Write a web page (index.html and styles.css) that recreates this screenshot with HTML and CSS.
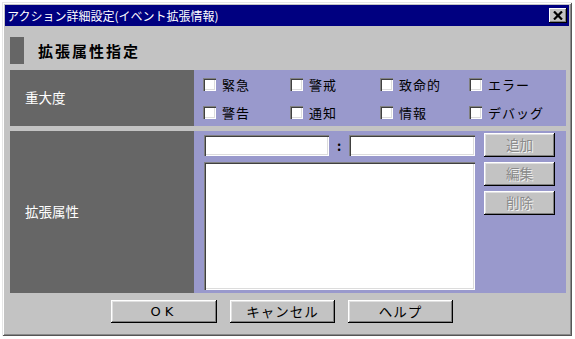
FILE: index.html
```html
<!DOCTYPE html>
<html lang="ja">
<head>
  <meta charset="UTF-8" />
  <title>アクション詳細設定（イベント拡張情報）</title>
  <link rel="stylesheet" href="styles.css">
</head>
<body>

  <div class="window">
    <div class="titlebar">
      <span class="title">アクション詳細設定(イベント拡張情報)</span>
      <button class="close" type="button" aria-label="閉じる">
        <svg width="10" height="9" viewBox="0 0 10 9"><path d="M1 0.5 L9 8.5 M9 0.5 L1 8.5" stroke="#000" stroke-width="2.2" /></svg>
      </button>
    </div>

    <div class="content">
      <div class="section-head">
        <span class="marker"></span>
        <h1>拡張属性指定</h1>
      </div>

      <div class="grid">
        <div class="label">重大度</div>
        <div class="cell severity">
          <label class="check"><span class="box"></span>緊急</label>
          <label class="check"><span class="box"></span>警戒</label>
          <label class="check"><span class="box"></span>致命的</label>
          <label class="check"><span class="box"></span>エラー</label>
          <label class="check"><span class="box"></span>警告</label>
          <label class="check"><span class="box"></span>通知</label>
          <label class="check"><span class="box"></span>情報</label>
          <label class="check"><span class="box"></span>デバッグ</label>
        </div>

        <div class="label">拡張属性</div>
        <div class="cell attrs">
          <div class="editor">
            <div class="pair">
              <input type="text" class="field key" />
              <span class="colon">:</span>
              <input type="text" class="field value" />
            </div>
            <div class="list"></div>
          </div>
          <div class="side-buttons">
            <button class="btn disabled" type="button">追加</button>
            <button class="btn disabled" type="button">編集</button>
            <button class="btn disabled" type="button">削除</button>
          </div>
        </div>
      </div>

      <div class="actions">
        <button class="btn wide ok" type="button">OK</button>
        <button class="btn wide" type="button">キャンセル</button>
        <button class="btn wide" type="button">ヘルプ</button>
      </div>
    </div>
  </div>

</body>
</html>
```

FILE: styles.css
```css
body {
  margin: 0;
  background-color: #fff;
  font-family: "Noto Sans CJK JP", "DejaVu Sans", sans-serif;
  font-size: 13px;
  color: #000;
}

.window {
  margin: 2px 0 0 2px;
  width: 570px;
  height: 334px;
  box-sizing: border-box;
  padding: 3px 3px 3px 3px;
  background-color: #c3c3c3;
  box-shadow: inset 1px 1px #e6e6e6, inset -1px -1px #555, inset 2px 2px #fff, inset -2px -2px #8a8a8a;
}

/* title bar */
.titlebar {
  height: 21px;
  background-color: #000080;
  display: flex;
  align-items: center;
  justify-content: space-between;
  padding: 0 2px 0 2px;
}

.title {
  color: #fff;
  font-size: 12px;
  line-height: 21px;
}

.close {
  width: 18px;
  height: 15px;
  padding: 0;
  border: none;
  background-color: #c3c3c3;
  display: flex;
  align-items: center;
  justify-content: center;
  box-shadow: inset -1px -1px #000, inset 1px 1px #fff, inset -2px -2px #808080;
}

/* content */
.content {
  padding: 0 3px 0 5px;
}

.section-head {
  display: flex;
  align-items: center;
  margin-top: 11px;
  height: 27px;
}

.marker {
  width: 14px;
  height: 27px;
  background-color: #666;
}

.section-head h1 {
  margin: 0 0 0 14px;
  font-size: 15px;
  font-weight: bold;
  letter-spacing: 2px;
  line-height: 27px;
}

.grid {
  display: grid;
  grid-template-columns: 184px 1fr;
  grid-template-rows: 56px 162px;
  row-gap: 5px;
  margin-top: 6px;
}

.label {
  background-color: #666;
  color: #fff;
  font-size: 13.5px;
  display: flex;
  align-items: center;
  padding-left: 15px;
  line-height: 1;
}

.cell {
  background-color: #9999cc;
}

/* severity checkboxes */
.severity {
  display: grid;
  grid-template-columns: 87px 90px 89px 1fr;
  grid-template-rows: 28px 28px;
  padding-left: 9px;
}

.check {
  display: flex;
  align-items: center;
  gap: 6px;
  font-size: 13px;
  letter-spacing: 1px;
  line-height: 1;
}

.box {
  width: 13px;
  height: 13px;
  box-sizing: border-box;
  background-color: #fff;
  box-shadow: inset 1px 1px #808080, inset 2px 2px #404040, inset -1px -1px #fff, inset -2px -2px #dcdcdc;
}

/* attributes */
.attrs {
  display: flex;
  padding: 2px 10px 0 10px;
  gap: 9px;
}

.editor {
  width: 271px;
  margin-top: 2px;
}

.pair {
  display: flex;
  height: 21px;
}

.field {
  box-sizing: border-box;
  height: 21px;
  margin: 0;
  padding: 0;
  border: none;
  background-color: #fff;
  box-shadow: inset 1px 1px #808080, inset 2px 2px #404040, inset -1px -1px #fff, inset -2px -2px #dcdcdc;
}

.key {
  width: 125px;
}

.value {
  width: 126px;
}

.colon {
  width: 20px;
  text-align: center;
  font-weight: bold;
  line-height: 21px;
}

.list {
  margin-top: 6px;
  height: 128px;
  background-color: #fff;
  box-shadow: inset 1px 1px #808080, inset 2px 2px #404040, inset -1px -1px #fff, inset -2px -2px #dcdcdc;
}

.side-buttons {
  display: flex;
  flex-direction: column;
  gap: 5px;
}

/* buttons */
.btn {
  box-sizing: border-box;
  width: 71px;
  height: 24px;
  padding: 0;
  border: none;
  background-color: #c3c3c3;
  font-family: "Noto Sans CJK JP", "DejaVu Sans", sans-serif;
  font-size: 13.5px;
  line-height: 1;
  color: #000;
  box-shadow: inset -1px -1px #000, inset 1px 1px #fff, inset -2px -2px #808080, inset 2px 2px #e0e0e0;
}

.btn.disabled {
  color: #8a8a8a;
  text-shadow: 1px 1px #f2f2f2;
}

.actions {
  display: flex;
  gap: 13px;
  padding-left: 101px;
  margin-top: 7px;
}

.btn.wide {
  width: 105px;
  height: 23px;
  letter-spacing: 1px;
}

.btn.ok {
  width: 106px;
  letter-spacing: 4px;
  font-family: "DejaVu Sans", sans-serif;
  font-size: 13px;
}
```
